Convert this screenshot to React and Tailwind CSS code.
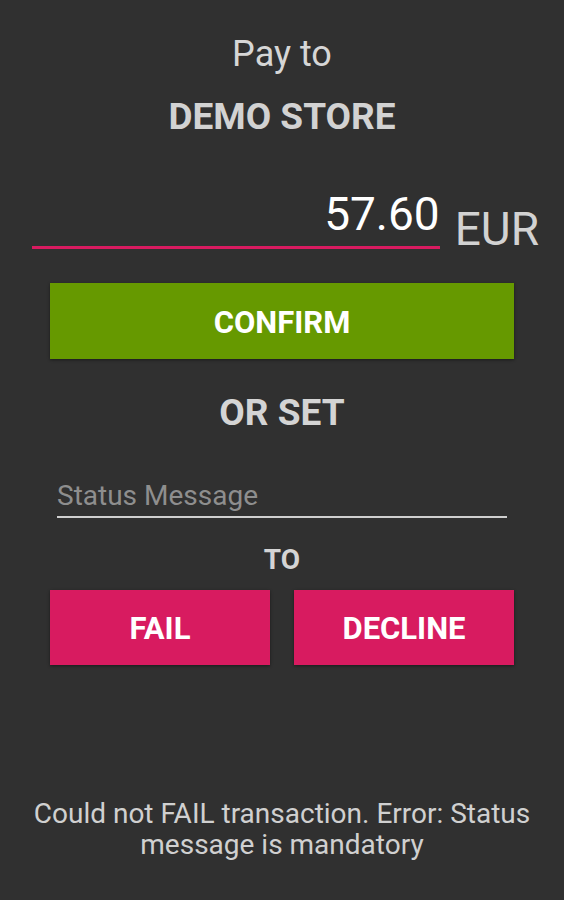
const App = () => {
  return (
    <div className="min-h-screen bg-[#303030] font-['Roboto','Liberation_Sans',sans-serif] flex flex-col items-center">
      {/* Header */}
      <p className="mt-[34px] text-[36px] leading-[40px] text-[#d6d6d6]">Pay to</p>
      <h1 className="mt-[23px] text-[37px] leading-[40px] font-bold text-[#d2d2d2]">DEMO STORE</h1>

      {/* Amount */}
      <div className="mt-[54px] w-full pl-[32px] pr-[25px] flex items-end gap-[15px]">
        <div className="flex-1 border-b-[3px] border-[#d81b60] pb-[9px] text-right text-[46px] leading-[46px] text-white">
          57.60
        </div>
        <span className="text-[46px] leading-[40px] text-[#d2d2d2]">EUR</span>
      </div>

      {/* Confirm */}
      <div className="mt-[34px] w-full px-[50px]">
        <button className="w-full h-[76px] pt-[4px] bg-[#669900] text-white text-[31px] font-bold shadow-[0_1px_3px_rgba(0,0,0,0.45)]">
          CONFIRM
        </button>
      </div>

      <h2 className="mt-[34px] text-[37px] leading-[40px] font-bold text-[#d4d4d4]">OR SET</h2>

      {/* Status message */}
      <div className="mt-[47px] w-full px-[57px]">
        <div className="border-b-2 border-[#cfcfcf] pb-[4px] text-[28px] leading-[32px] text-[#8e8e8e]">
          Status Message
        </div>
      </div>

      <p className="mt-[26px] text-[28px] leading-[32px] font-bold text-[#d4d4d4]">TO</p>

      {/* Fail / Decline */}
      <div className="mt-[14px] w-full px-[50px] flex gap-[24px]">
        <button className="flex-1 h-[75px] pt-[3px] bg-[#d81b60] text-white text-[31px] font-bold shadow-[0_1px_3px_rgba(0,0,0,0.45)]">
          FAIL
        </button>
        <button className="flex-1 h-[75px] pt-[3px] bg-[#d81b60] text-white text-[31px] font-bold shadow-[0_1px_3px_rgba(0,0,0,0.45)]">
          DECLINE
        </button>
      </div>

      {/* Error */}
      <p className="mt-[133px] px-[20px] text-center text-[28px] leading-[31px] text-[#d0d0d0]">
        Could not FAIL transaction. Error: Status message is mandatory
      </p>
    </div>
  );
};

export default App;
